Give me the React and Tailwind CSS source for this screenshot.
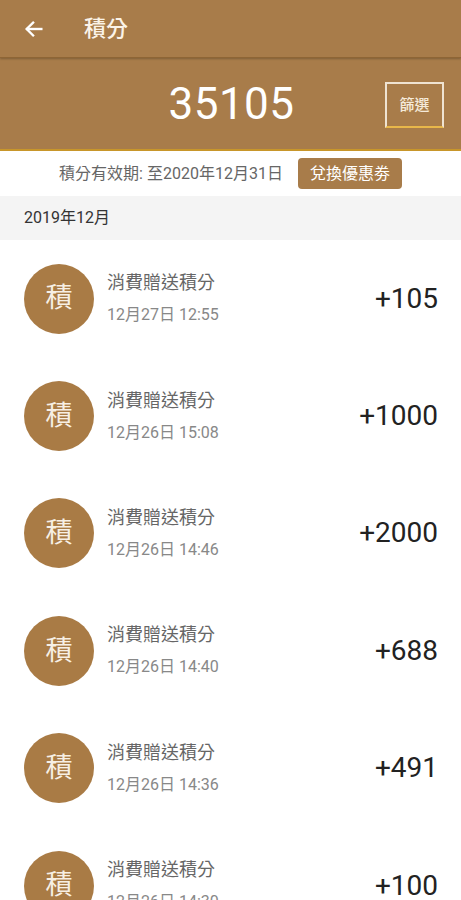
import React from "react";

const records = [
  { title: "消費贈送積分", time: "12月27日 12:55", amount: "+105" },
  { title: "消費贈送積分", time: "12月26日 15:08", amount: "+1000" },
  { title: "消費贈送積分", time: "12月26日 14:46", amount: "+2000" },
  { title: "消費贈送積分", time: "12月26日 14:40", amount: "+688" },
  { title: "消費贈送積分", time: "12月26日 14:36", amount: "+491" },
  { title: "消費贈送積分", time: "12月26日 14:30", amount: "+100" },
];

const font = { fontFamily: "Roboto, 'Noto Sans CJK TC', sans-serif" };

export default function App() {
  return (
    <div className="w-[461px] h-[900px] overflow-hidden bg-white" style={font}>
      {/* app bar */}
      <div className="h-[58px] bg-[#a87c4a] flex items-center border-b border-[#8e6535] shadow-[0_1px_2px_rgba(0,0,0,0.25)] relative z-10">
        <div className="w-[68px] pl-[23px]">
          <svg width="22" height="22" viewBox="0 0 24 24" fill="none" stroke="#fff" strokeWidth="2.6" strokeLinecap="square">
            <path d="M20 12H5" />
            <path d="M11 5l-7 7 7 7" />
          </svg>
        </div>
        <span className="text-[22px] text-[#fbf3e8] ml-[16px] font-medium">積分</span>
      </div>

      {/* points */}
      <div className="h-[93px] bg-[#a87c4a] border-b-2 border-[#c8962a] flex items-center relative">
        <div className="flex-1 text-center text-[44px] text-white leading-none pl-[2px] tracking-[0.5px]">35105</div>
        <div className="absolute right-[17px] top-[24px] w-[59px] h-[46px] border-2 border-[#efe3d2] border-b-[#e8b74a] flex items-center justify-center text-[15px] font-medium text-[#f5ead9]">
          篩選
        </div>
      </div>

      {/* expiry */}
      <div className="h-[45px] flex items-center justify-center gap-[15px]">
        <span className="text-[16px] text-[#666]">積分有效期: 至2020年12月31日</span>
        <span className="h-[31px] px-[12px] rounded-[4px] bg-[#a87c4a] text-white text-[16px] flex items-center">兌換優惠劵</span>
      </div>

      {/* month */}
      <div className="h-[44px] bg-[#f4f4f4] flex items-center pl-[24px] text-[16px] text-[#333]">2019年12月</div>

      {/* list */}
      <div>
        {records.map((r, i) => (
          <div key={i} className="h-[117.4px] flex items-center pl-[24px] pr-[23px]">
            <div className="w-[70px] h-[70px] rounded-full bg-[#a97b45] flex items-center justify-center text-[27px] text-[#f7efe4] shrink-0">
              積
            </div>
            <div className="flex-1 ml-[13px] flex flex-col gap-[11px]">
              <span className="text-[18px] text-[#666] leading-[22px]">{r.title}</span>
              <span className="text-[16px] text-[#888] leading-[20px]">{r.time}</span>
            </div>
            <span className="text-[28px] text-[#222]">{r.amount}</span>
          </div>
        ))}
      </div>
    </div>
  );
}
